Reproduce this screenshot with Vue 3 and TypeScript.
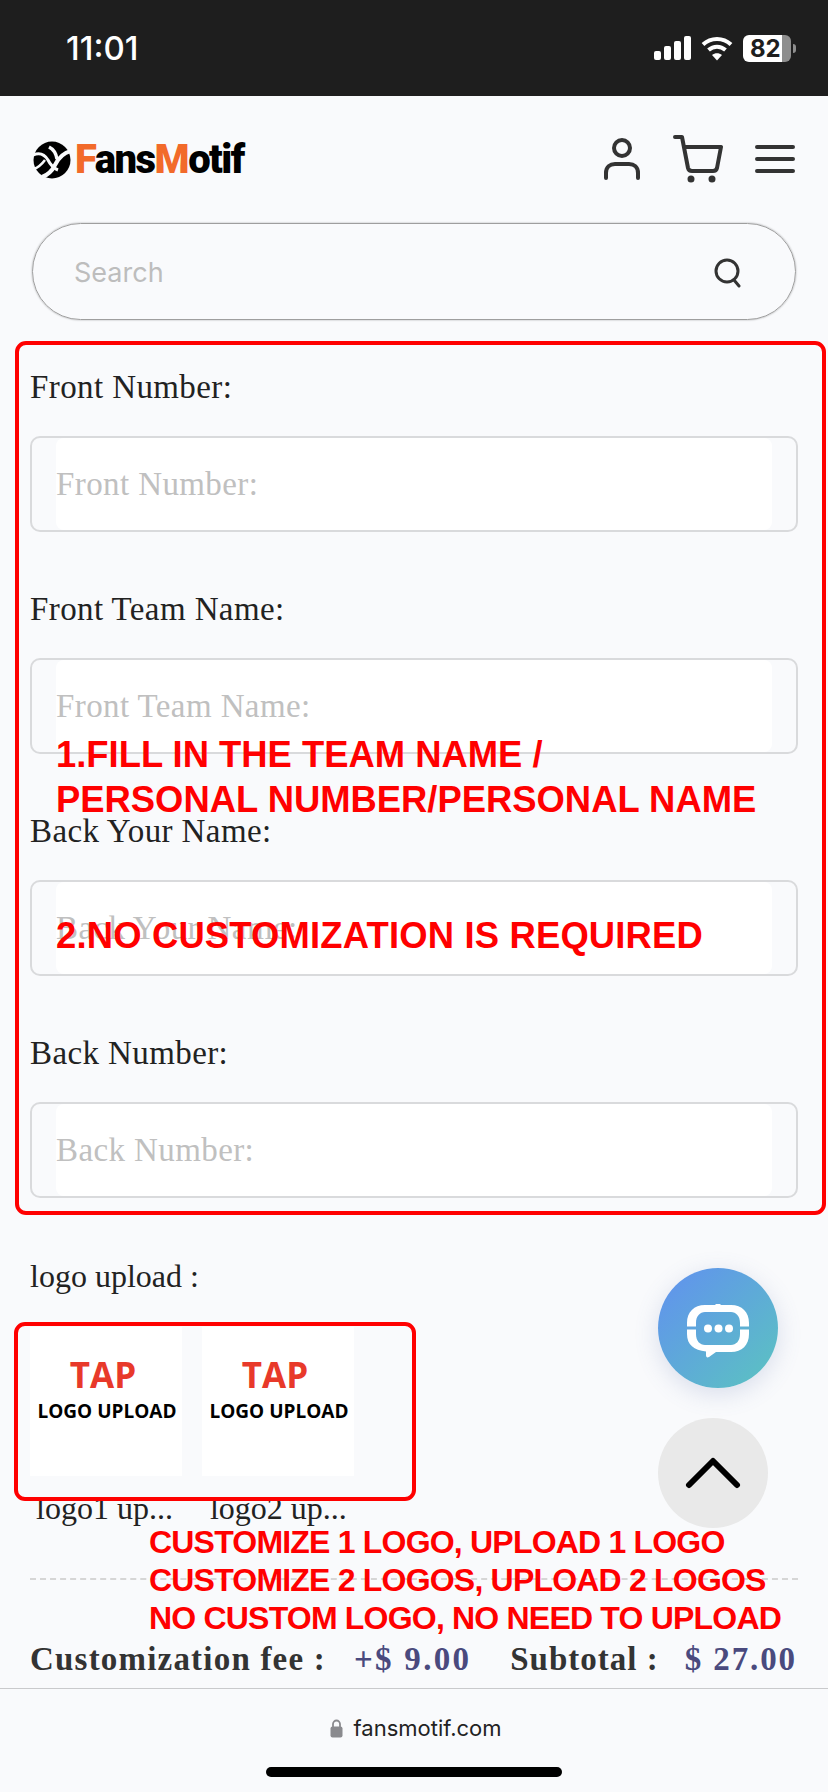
<script setup lang="ts">
const fields = ['Front Number:', 'Front Team Name:', 'Back Your Name:', 'Back Number:'];
const logos = ['logo1 up...', 'logo2 up...'];
</script>

<template>
  <div class="page">
    <div class="status-bar">
      <span class="time">11:01</span>
      <div class="status-icons">
        <svg width="37" height="24" viewBox="0 0 37 24" fill="#fff">
          <rect x="0" y="15" width="7" height="9" rx="2" />
          <rect x="10" y="10" width="7" height="14" rx="2" />
          <rect x="20" y="5" width="7" height="19" rx="2" />
          <rect x="30" y="0" width="7" height="24" rx="2" />
        </svg>
        <svg width="32" height="25" viewBox="0 0 32 25" fill="none" stroke="#fff" stroke-width="4">
          <path d="M2 8.5C10 1 22 1 30 8.5" />
          <path d="M7.5 14C12.5 9.5 19.5 9.5 24.5 14" />
          <path d="M16 24.5l-5-5.5c3-2.2 7-2.2 10 0z" fill="#fff" stroke="none" />
        </svg>
        <div class="battery">
          <div class="battery-body"><span>82</span></div>
          <div class="battery-cap"></div>
        </div>
      </div>
    </div>

    <header class="top">
      <div class="logo">
        <svg width="38" height="38" viewBox="0 0 38 38">
          <circle cx="19" cy="19" r="18.5" fill="#000" />
          <g fill="none" stroke="#f9fafc" stroke-linecap="butt">
            <path d="M38 10C30 12 25 18 22 24C19 30 15 34 9 36" stroke-width="4" />
            <path d="M16 6C20 8 23 12 24 18" stroke-width="3.500" />
            <path d="M0 14C7 11 12 14 15 19C17 23 20 27 25 29" stroke-width="3" />
            <path d="M12 19C9 23 6 26 1 28" stroke-width="2.500" />
          </g>
        </svg>
        <span class="logo-text"><b>F</b>ans<b>M</b>otif</span>
      </div>
      <div class="top-icons">
        <svg width="38" height="44" viewBox="0 0 38 44" fill="none" stroke="#333" stroke-width="4" stroke-linecap="round">
          <circle cx="19" cy="11" r="8" />
          <path d="M3 41V36C3 30 7 27 12 27H26C31 27 35 30 35 36V41" />
        </svg>
        <svg width="50" height="48" viewBox="0 0 50 48" fill="none" stroke="#333" stroke-width="4" stroke-linecap="round" stroke-linejoin="round">
          <path d="M2 2H9L15 33C15.500 35 17 36 19 36H40C42 36 43.500 35 44 33L48 12H11" />
          <circle cx="18" cy="44" r="2.500" fill="#333" stroke-width="2" />
          <circle cx="39" cy="44" r="2.500" fill="#333" stroke-width="2" />
        </svg>
        <svg width="40" height="28" viewBox="0 0 40 28" fill="none" stroke="#333" stroke-width="4" stroke-linecap="round">
          <path d="M2 2H38M2 14H38M2 26H38" />
        </svg>
      </div>
    </header>

    <div class="search">
      <span class="search-text">Search</span>
      <svg width="30" height="30" viewBox="0 0 30 30" fill="none" stroke="#333" stroke-width="3" stroke-linecap="round">
        <circle cx="14" cy="13" r="11" />
        <path d="M21 22L26 28" />
      </svg>
    </div>

    <div class="red-box fields">
      <div v-for="f in fields" :key="f" class="field">
        <label>{{ f }}</label>
        <div class="input-wrap">
          <input type="text" :placeholder="f" />
        </div>
      </div>
    </div>

    <div class="upload-label">logo upload :</div>

    <div class="red-box uploads">
      <div v-for="n in 2" :key="n" class="tile">
        <span class="tap">TAP</span>
        <span class="tap-sub">LOGO UPLOAD</span>
      </div>
    </div>

    <div class="logo-names">
      <span v-for="l in logos" :key="l">{{ l }}</span>
    </div>

    <div class="dash"></div>

    <div class="totals">
      <span class="t-label">Customization fee :</span>
      <span class="t-price">+$ 9.00</span>
      <span class="t-label sub">Subtotal :</span>
      <span class="t-price last">$ 27.00</span>
    </div>

    <footer class="browser">
      <div class="url">
        <svg width="13" height="19" viewBox="0 0 13 19">
          <path d="M3 8V5a3.500 3.500 0 0 1 7 0v3" fill="none" stroke="#8a8a8e" stroke-width="1.800" />
          <rect x="0.500" y="7.500" width="12" height="11" rx="2" fill="#8a8a8e" />
        </svg>
        <span>fansmotif.com</span>
      </div>
      <div class="home"></div>
    </footer>

    <!-- annotations drawn on top of the screenshot -->
    <div class="note note-a">1.FILL IN THE TEAM NAME /<br />PERSONAL NUMBER/PERSONAL NAME</div>
    <div class="note note-b">2.NO CUSTOMIZATION IS REQUIRED</div>
    <div class="note note-c">CUSTOMIZE 1 LOGO, UPLOAD 1 LOGO<br />CUSTOMIZE 2 LOGOS, UPLOAD 2 LOGOS<br />NO CUSTOM LOGO, NO NEED TO UPLOAD</div>

    <button class="chat">
      <svg width="66" height="56" viewBox="0 0 66 56">
        <path d="M20 1H30L33 -2L36 1H46C57 1 64 8 64 19V22.500H55V19C55 12 51 8 46 8H20C15 8 11 12 11 19V22.500H2V19C2 8 9 1 20 1z" fill="#fff" />
        <path d="M2 25.500H11V30C11 37 15 41 20 41H46C51 41 55 37 55 30V25.500H64V30C64 41 57 48 46 48H31L24 53C22 54 21 53 21 51V47.500C9 46 2 41 2 30z" fill="#fff" />
        <circle cx="23" cy="24.500" r="4" fill="#fff" />
        <circle cx="33.500" cy="24.500" r="4" fill="#fff" />
        <circle cx="44" cy="24.500" r="4" fill="#fff" />
      </svg>
    </button>
    <button class="to-top">
      <svg width="56" height="34" viewBox="0 0 56 34" fill="none" stroke="#000" stroke-width="6" stroke-linecap="round" stroke-linejoin="round">
        <path d="M4 29L28 5L52 29" />
      </svg>
    </button>
  </div>
</template>

<style>
html,
body {
  margin: 0;
  background: #f9fafc;
}
</style>

<style scoped>
.page {
  position: relative;
  width: 828px;
  height: 1792px;
  overflow: hidden;
  display: flex;
  flex-direction: column;
  background: #f9fafc;
  font-family: "Liberation Serif", serif;
  color: #222;
}

.status-bar {
  flex: none;
  height: 96px;
  background: #1e1e1e;
  display: flex;
  align-items: center;
  justify-content: space-between;
  padding: 0 32px 0 66px;
  box-sizing: border-box;
}

.time {
  font-family: Inter, sans-serif;
  font-size: 33px;
  font-weight: 500;
  color: #fff;
}

.status-icons {
  display: flex;
  align-items: center;
  gap: 10px;
}

.battery {
  display: flex;
  align-items: center;
  gap: 2px;
}

.battery-body {
  width: 48px;
  height: 27px;
  border-radius: 6px;
  background: linear-gradient(90deg, #fff 82%, #8e8e8e 82%);
  display: flex;
  align-items: center;
  padding-left: 7px;
  box-sizing: border-box;
}

.battery-body span {
  font-family: Inter, sans-serif;
  font-size: 24px;
  font-weight: 700;
  color: #1e1e1e;
}

.battery-cap {
  width: 3px;
  height: 9px;
  border-radius: 0 3px 3px 0;
  background: #8e8e8e;
}

.top {
  flex: none;
  height: 127px;
  padding: 0 33px 0 33px;
  box-sizing: border-box;
  display: flex;
  align-items: center;
  justify-content: space-between;
}

.logo {
  display: flex;
  align-items: center;
  gap: 4px;
}

.logo-text {
  font-family: Roboto, sans-serif;
  font-size: 40px;
  font-weight: 900;
  color: #000;
  letter-spacing: -1.5px;
}

.logo-text b {
  color: #f26a2a;
  font-weight: 900;
}

.top-icons {
  display: flex;
  align-items: center;
  gap: 32px;
  margin-top: -2px;
}

.search {
  flex: none;
  height: 97px;
  margin: 0 32px;
  padding: 2px 52px 0 41px;
  box-sizing: border-box;
  display: flex;
  align-items: center;
  justify-content: space-between;
  border: 1.5px solid #9e9e9e;
  border-radius: 49px;
  box-shadow: 0 0 2px rgba(0, 0, 0, 0.35);
}

.search-text {
  font-family: Inter, sans-serif;
  font-size: 27px;
  color: #bdbdbd;
}

.red-box {
  border: 4px solid #f00;
  border-radius: 11px;
  box-sizing: border-box;
}

.fields {
  flex: none;
  height: 874px;
  margin: 21px 2px 0 15px;
  padding: 0 24px 0 11px;
  display: flex;
  flex-direction: column;
}

.field {
  height: 222px;
  flex: none;
}

.field label {
  display: block;
  height: 91px;
  padding-top: 21px;
  box-sizing: border-box;
  font-size: 33px;
  line-height: 42px;
  letter-spacing: 0.4px;
  color: #222;
}

.input-wrap {
  height: 96px;
  border: 2px solid #d9dadc;
  border-radius: 10px;
  box-sizing: border-box;
  padding: 0 24px;
}

.input-wrap input {
  display: block;
  width: 100%;
  height: 100%;
  border: none;
  outline: none;
  padding: 0;
  box-sizing: border-box;
  background: #fff;
  border-radius: 8px;
  font-family: "Liberation Serif", serif;
  font-size: 33px;
  letter-spacing: 0.4px;
}

.input-wrap input::placeholder {
  color: #c0c0c0;
  opacity: 1;
}

.upload-label {
  flex: none;
  margin: 38px 0 0 30px;
  height: 46px;
  font-size: 32px;
  line-height: 46px;
}

.uploads {
  position: relative;
  z-index: 1;
  flex: none;
  width: 402px;
  height: 179px;
  margin: 23px 0 0 14px;
  padding: 1px 0 0 12px;
  display: flex;
  gap: 20px;
}

.tile {
  width: 152px;
  height: 149px;
  background: #fff;
  display: flex;
  flex-direction: column;
  align-items: center;
  font-family: "Open Sans", sans-serif;
  font-weight: 700;
}

.tap {
  font-size: 35px;
  line-height: 40px;
  margin: 28px 6px 0 0;
  color: #e8392a;
}

.tap-sub {
  font-size: 19px;
  line-height: 24px;
  margin: 4px 0 0 2px;
  color: #000;
  white-space: nowrap;
}

.logo-names {
  flex: none;
  display: flex;
  gap: 37px;
  margin: -11px 0 0 36px;
  height: 40px;
  font-size: 32px;
  line-height: 36px;
}

.dash {
  flex: none;
  margin: 48px 30px 0;
  border-top: 2px dashed #d6d6d6;
}

.totals {
  flex: none;
  margin: 60px 31px 0 30px;
  display: flex;
  align-items: center;
  font-size: 33px;
  line-height: 38px;
  font-weight: 700;
  white-space: nowrap;
}

.t-label {
  color: #333;
  letter-spacing: 1.2px;
}

.t-label.sub {
  margin-left: auto;
  letter-spacing: 1px;
}

.t-price {
  color: #4a4a7e;
  margin-left: 28px;
  letter-spacing: 2.3px;
}

.t-price.last {
  margin-left: 26px;
  letter-spacing: 1.9px;
}

.browser {
  position: absolute;
  left: 0;
  right: 0;
  top: 1688px;
  height: 104px;
  border-top: 1px solid #c9cacc;
  box-sizing: border-box;
  display: flex;
  flex-direction: column;
  align-items: center;
}

.url {
  display: flex;
  align-items: center;
  gap: 10px;
  margin-top: 26px;
  padding-left: 4px;
  font-family: Inter, sans-serif;
  font-size: 22px;
  line-height: 26px;
  color: #222;
}

.home {
  width: 296px;
  height: 10px;
  margin-top: 26px;
  border-radius: 5px;
  background: #000;
}

.note {
  position: absolute;
  z-index: 2;
  font-family: "Liberation Sans", sans-serif;
  font-weight: 700;
  color: #f00;
  white-space: nowrap;
}

.note-a {
  left: 56px;
  top: 732px;
  font-size: 36.4px;
  line-height: 45px;
}

.note-b {
  left: 56px;
  top: 913px;
  font-size: 36.4px;
  line-height: 45px;
  letter-spacing: 0.18px;
}

.note-c {
  left: 149px;
  top: 1523px;
  font-size: 32px;
  line-height: 38px;
  letter-spacing: -0.8px;
}

.chat,
.to-top {
  position: absolute;
  z-index: 2;
  border: none;
  padding: 0;
  border-radius: 50%;
  display: flex;
  align-items: center;
  justify-content: center;
}

.chat {
  left: 658px;
  top: 1268px;
  width: 120px;
  height: 120px;
  background: linear-gradient(135deg, #6190f0, #5bc4c0);
  box-shadow: 0 6px 24px rgba(90, 110, 170, 0.2);
}

.chat svg {
  margin-top: 8px;
}

.to-top {
  left: 658px;
  top: 1418px;
  width: 110px;
  height: 110px;
  background: #e9e9e9;
}
</style>
